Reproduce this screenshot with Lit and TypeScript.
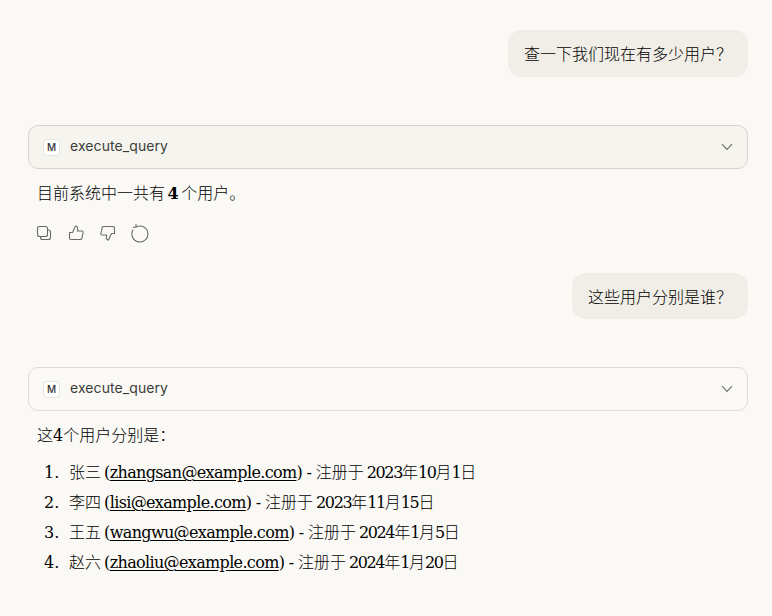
import { LitElement, html, css, svg } from "lit";
import { customElement } from "lit/decorators.js";

const tool = (bg: boolean) => html`
  <div class="tool ${bg ? "filled" : ""}">
    <span class="badge">M</span>
    <span class="name">execute_query</span>
    <svg class="chev" width="12" height="8" viewBox="0 0 12 8" fill="none"><path d="M1 1.2 6 6.4 11 1.2" stroke="#6f6e69" stroke-width="1.1"/></svg>
  </div>`;

const rows = [
  ["张三", "zhangsan@example.com", "2023", "10", "1"],
  ["李四", "lisi@example.com", "2023", "11", "15"],
  ["王五", "wangwu@example.com", "2024", "1", "5"],
  ["赵六", "zhaoliu@example.com", "2024", "1", "20"],
];

@customElement("app-root")
export class AppRoot extends LitElement {
  static styles = css`
    :host {
      display: block;
      width: 772px;
      height: 616px;
      overflow: hidden;
      background: #faf9f5;
      color: #000;
      font-family: "DejaVu Serif", "Noto Sans CJK SC", serif;
      font-size: 16px;
      line-height: 24px;
    }
    .page {
      padding: 30px 24px 0 28px;
      display: flex;
      flex-direction: column;
    }
    .user {
      align-self: flex-end;
      background: #f0eee6;
      border-radius: 14px;
      padding: 11px 16px 12px;
      font-family: "Noto Sans CJK SC", sans-serif;
      font-weight: 300;
      color: #000;
    }
    .tool {
      box-sizing: border-box;
      height: 44px;
      margin-top: 48px;
      border: 1px solid #dedcd4;
      border-radius: 10px;
      display: flex;
      align-items: center;
      padding: 0 14px;
      color: #3d3d3a;
      font-family: Inter, sans-serif;
      font-size: 14px;
    }
    .tool.filled {
      background: #f5f4ee;
      border-color: #d6d4cb;
    }
    .badge {
      width: 15px;
      height: 15px;
      border-radius: 4px;
      background: #fff;
      border: 1px solid #e6e4dd;
      font-size: 10px;
      font-weight: 500;
      line-height: 15px;
      text-align: center;
      color: #333;
    }
    .name { margin-left: 10px; flex: 1; letter-spacing: 0.08px; padding-bottom: 2px; }
    .reply { margin: 13px 0 0 9px; font-weight: 300; }
    .reply b { font-weight: 700; }
    .gap { letter-spacing: -2.6px; }
    .space { letter-spacing: -2px; }
    .narrow { letter-spacing: -0.65px; }
    .digits { letter-spacing: -1.4px; }
    .actions { display: flex; gap: 12px; margin: 17px 0 0 6px; height: 20px; }
    .actions svg { display: block; }
    .second { margin-top: 30px; padding-top: 11px; padding-bottom: 11px; }
    ol {
      margin: 13px 0 0 16px;
      padding: 0;
      list-style: none;
      counter-reset: row;
      font-weight: 300;
    }
    li { height: 30px; counter-increment: row; display: flex; white-space: pre; }
    li::before { content: counter(row) "."; width: 25px; flex: none; }
    a { color: inherit; text-decoration: underline; text-underline-offset: 2px; }
  `;

  render() {
    const ic = (p: unknown) => html`<svg width="20" height="20" viewBox="0 0 20 20" fill="none" stroke="#6b6a65" stroke-width="1.1" stroke-linejoin="round" stroke-linecap="round">${p}</svg>`;
    return html`<div class="page">
      <div class="user">查一下我们现在有多少用户\uFF1F</div>
      ${tool(true)}
      <div class="reply">目前系统中一共有<span class="gap"> </span><b>4</b><span class="gap"> </span>个用户。</div>
      <div class="actions">
        ${ic(svg`<rect x="3.500" y="3.500" width="10" height="10" rx="2"/><path d="M14 7h.5a2 2 0 0 1 2 2v5.500a2 2 0 0 1-2 2h-6a2 2 0 0 1-2-2V14"/>`)}
        ${ic(svg`<path d="M3.500 9.500h3l3-6.500c1.400 0 2.300 1 2.200 2.400L11.400 8H16c.8 0 1.300.7 1.100 1.500l-1.300 6c-.2.7-.7 1-1.400 1H5a1.500 1.500 0 0 1-1.500-1.500z"/>`)}
        ${ic(svg`<path d="M16.500 10.500h-3l-3 6.500c-1.400 0-2.300-1-2.200-2.400L8.600 12H4c-.8 0-1.300-.7-1.100-1.500l1.300-6c.2-.7.7-1 1.400-1H15a1.500 1.500 0 0 1 1.500 1.500z"/>`)}
        ${ic(svg`<path d="M6.500 3.800A8 8 0 1 1 3 7"/><path d="M6 1.500v2.800H3.300"/>`)}
      </div>
      <div class="user second">这些用户分别是谁\uFF1F</div>
      ${tool(false)}
      <div class="reply">这4个用户分别是\uFF1A</div>
      <ol>
        ${rows.map(
          ([n, mail, y, m, d]) => html`<li><span>${n}<span class="space"> </span><span class="narrow">(<a>${mail}</a>) - </span>注册于<span class="space"> </span><span class="digits">${y}</span>年<span class="digits">${m}</span>月<span class="digits">${d}</span>日</span></li>`
        )}
      </ol>
    </div>`;
  }
}
